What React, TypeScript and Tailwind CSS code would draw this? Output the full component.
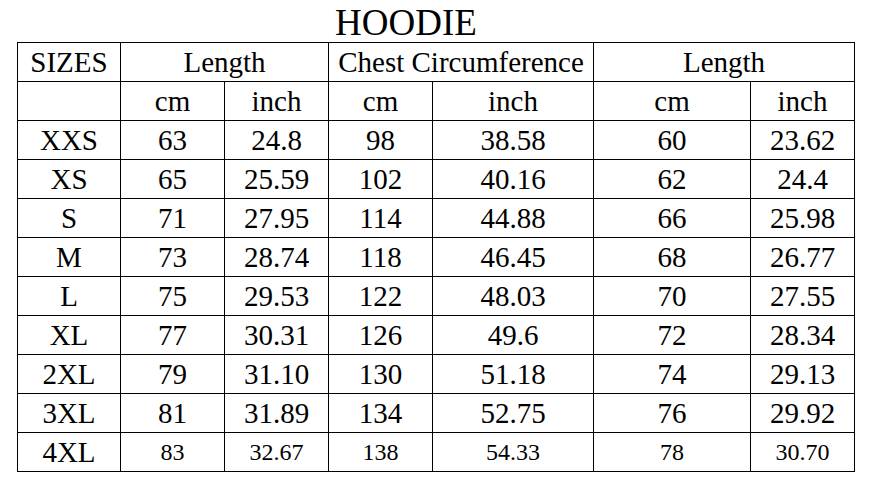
const ROWS: [string, string, string, string, string, string, string][] = [
  ['XXS', '63', '24.8', '98', '38.58', '60', '23.62'],
  ['XS', '65', '25.59', '102', '40.16', '62', '24.4'],
  ['S', '71', '27.95', '114', '44.88', '66', '25.98'],
  ['M', '73', '28.74', '118', '46.45', '68', '26.77'],
  ['L', '75', '29.53', '122', '48.03', '70', '27.55'],
  ['XL', '77', '30.31', '126', '49.6', '72', '28.34'],
  ['2XL', '79', '31.10', '130', '51.18', '74', '29.13'],
  ['3XL', '81', '31.89', '134', '52.75', '76', '29.92'],
  ['4XL', '83', '32.67', '138', '54.33', '78', '30.70'],
]

function Cell({ children, span, small }: { children?: React.ReactNode; span?: boolean; small?: boolean }) {
  return (
    <div
      className={
        'flex items-center justify-center bg-white leading-none ' +
        (span ? 'col-span-2 ' : '') +
        (small ? 'text-[24px]' : 'text-[29px]')
      }
    >
      {children}
    </div>
  )
}

export default function App() {
  return (
    <div className="h-[485px] w-[878px] bg-white font-['Liberation_Serif','Times_New_Roman',serif] text-black">
      <div className="flex h-[42px] w-[812px] items-center justify-center pt-[2px] text-[37px] leading-none">
        HOODIE
      </div>
      <div className="ml-[17px] grid w-[838px] grid-cols-[102px_103px_103px_103px_160px_156px_103px] grid-rows-[repeat(11,38px)] gap-px border border-black bg-black">
        <Cell>SIZES</Cell>
        <Cell span>Length</Cell>
        <Cell span>Chest Circumference</Cell>
        <Cell span>Length</Cell>

        <Cell />
        <Cell>cm</Cell>
        <Cell>inch</Cell>
        <Cell>cm</Cell>
        <Cell>inch</Cell>
        <Cell>cm</Cell>
        <Cell>inch</Cell>

        {ROWS.map((row, r) =>
          row.map((v, c) => (
            <Cell key={r + '-' + c} small={r === ROWS.length - 1 && c > 0}>
              {v}
            </Cell>
          ))
        )}
      </div>
    </div>
  )
}
